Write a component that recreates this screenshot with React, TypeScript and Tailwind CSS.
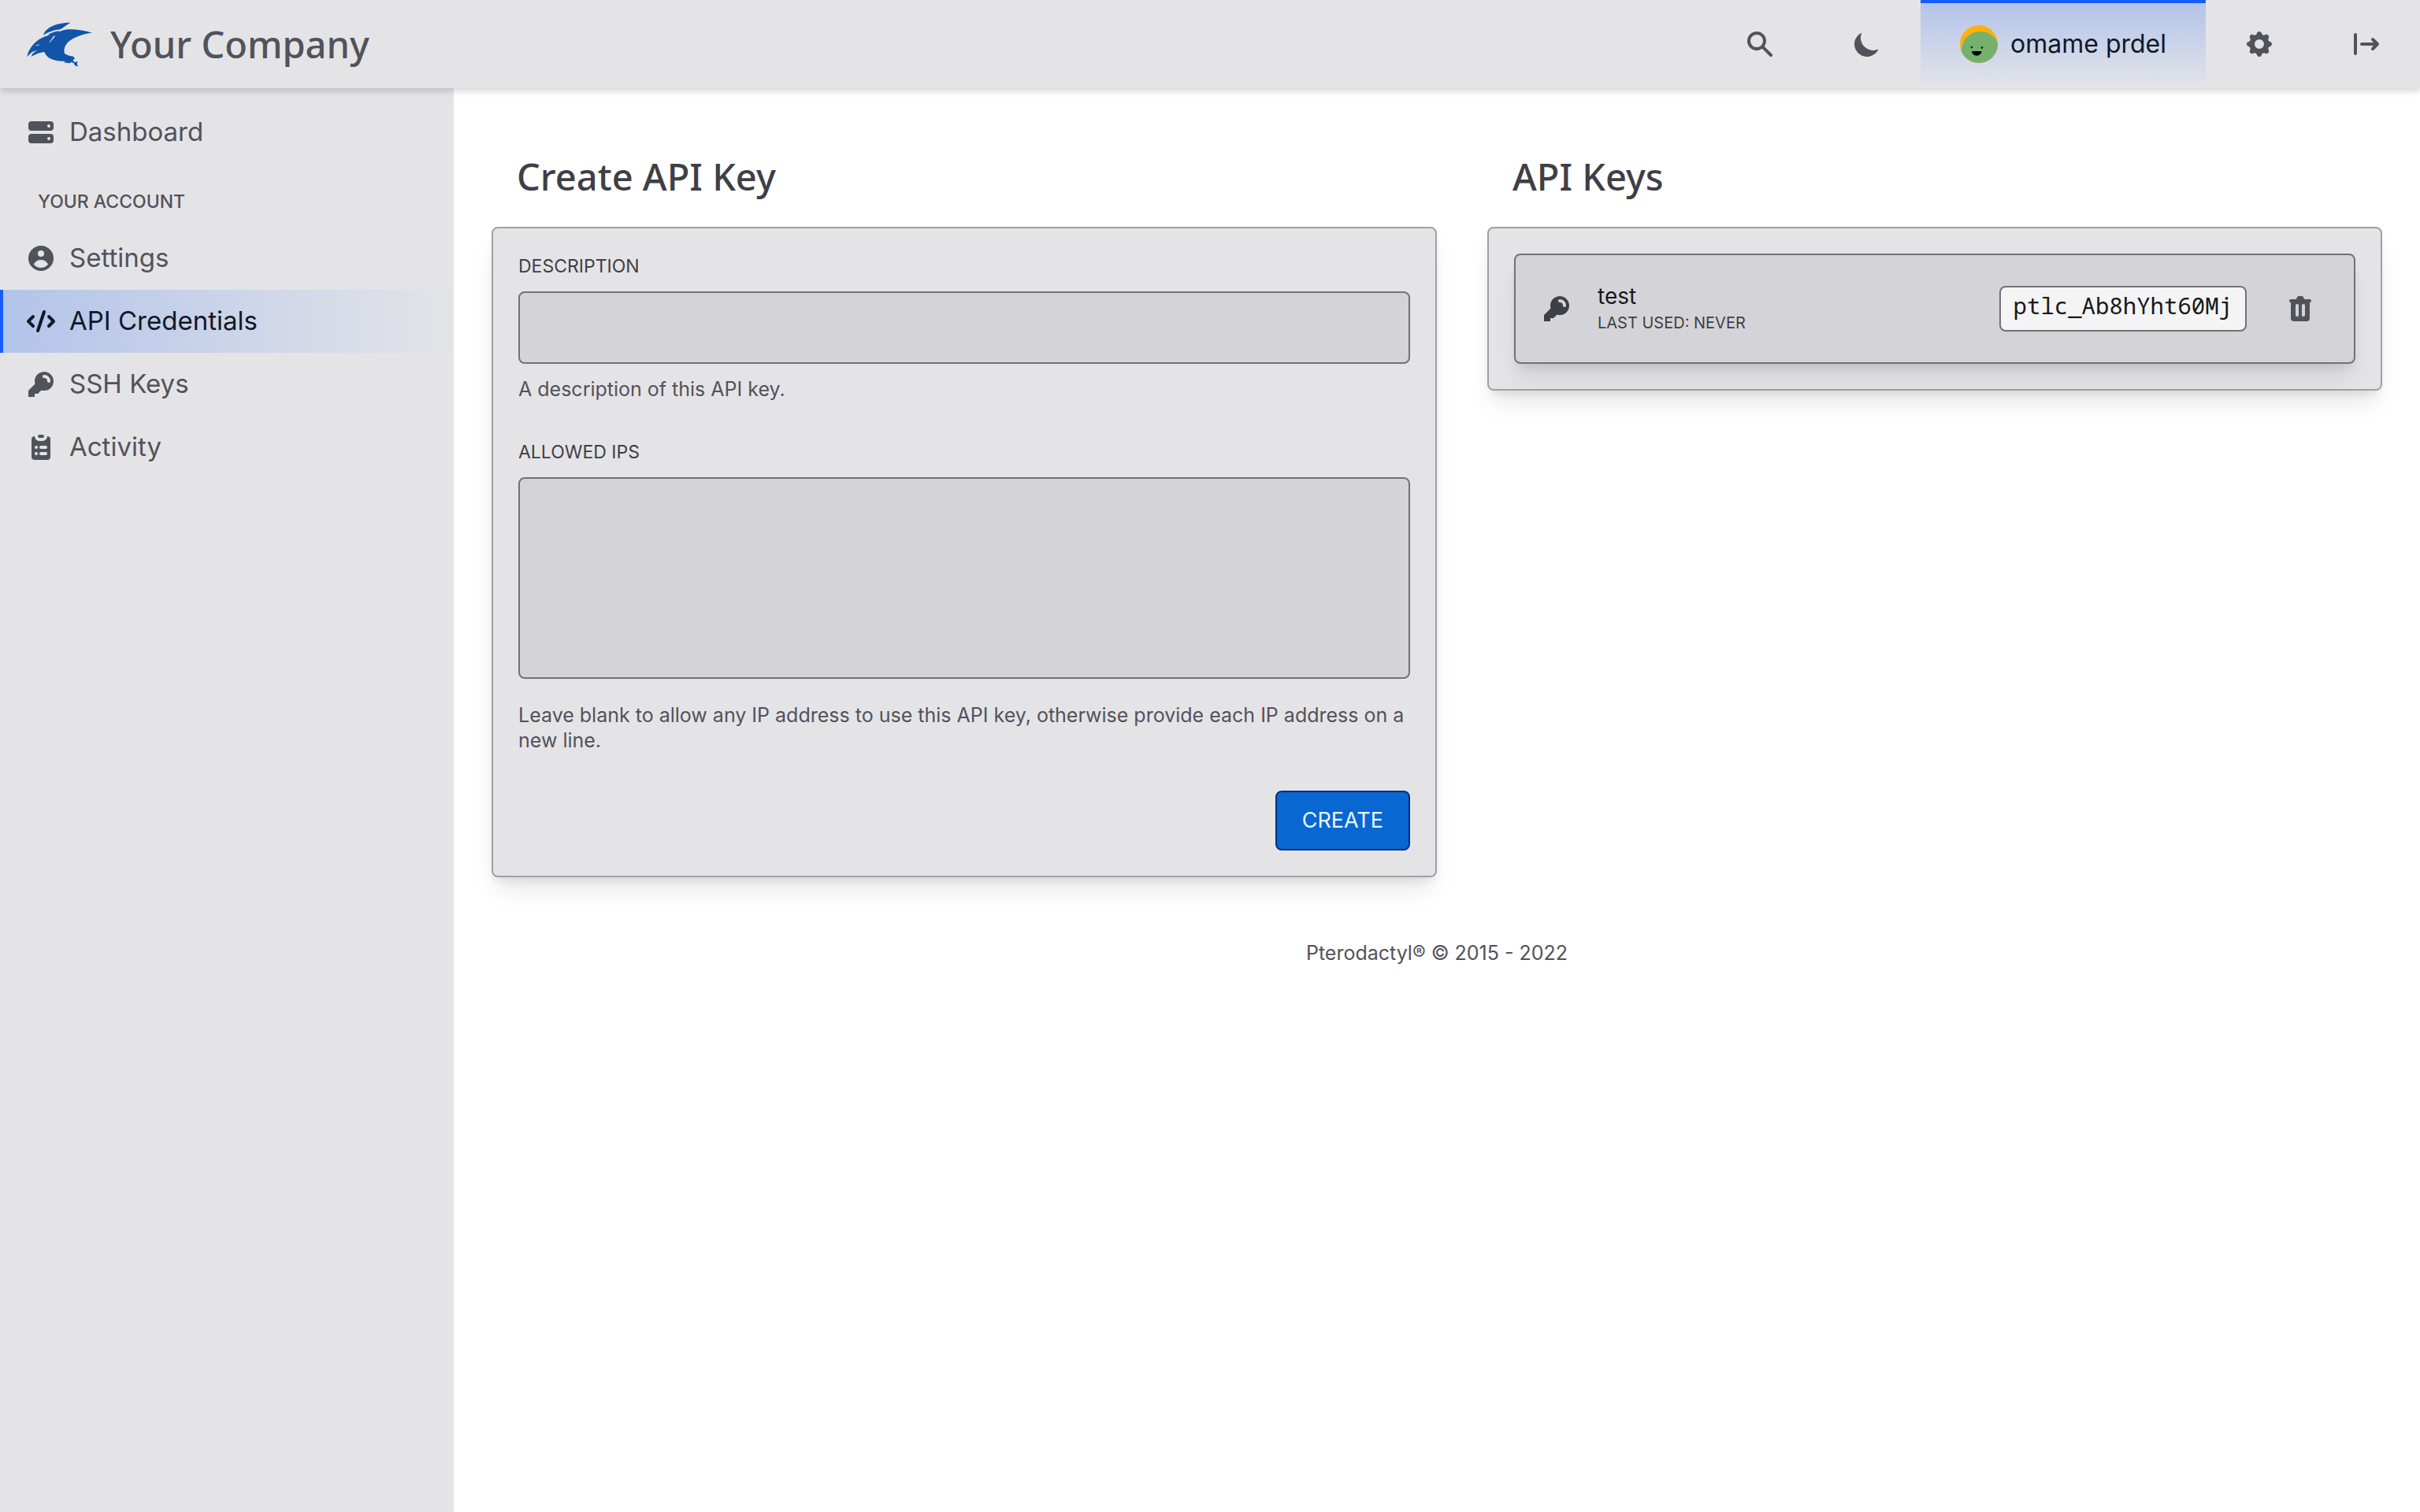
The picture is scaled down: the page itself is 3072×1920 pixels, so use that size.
import { useId } from "react";
import type { ReactNode } from "react";
import { HiServer, HiUserCircle, HiCode, HiKey, HiClipboardList, HiMoon, HiCog, HiSearch, HiTrash } from "react-icons/hi";

const links = [
  { label: "Settings", Icon: HiUserCircle, active: false },
  { label: "API Credentials", Icon: HiCode, active: true },
  { label: "SSH Keys", Icon: HiKey, active: false },
  { label: "Activity", Icon: HiClipboardList, active: false },
];

function Logo() {
  return (
    <svg viewBox="0 0 330 240" className="h-20 w-[110px] shrink-0" fill="#1254a8" aria-hidden="true">
      <path d="M99 86C106 58 148 38 202 38C190 46 176 55 164 64C140 66 118 74 99 86Z" />
      <path d="M116 85C130 76 146 71 162 70C156 77 151 83 146 90C140 88 130 88 116 85Z" />
      <path d="M37 168C42 140 62 116 84 101C100 91 124 84 144 80L120 116L126 112L152 80C164 67 186 63 208 64C236 65 262 70 285 77C252 80 222 92 204 104C186 116 174 134 180 156C188 162 202 166 214 167L219 177L211 180L217 188C222 191 226 186 231 186C226 192 226 198 232 205C222 205 216 200 215 192L202 188C204 192 200 194 195 192L176 190L184 185C158 186 138 182 122 173C112 167 107 160 103 150C88 152 66 158 53 169L58 156L76 143L56 150Z" />
      <path d="M68 126C74 124 80 122 84 119L80 126Z" fill="#e4e4e7" />
    </svg>
  );
}

function Avatar() {
  const clip = useId();
  return (
    <svg viewBox="0 0 48 48" className="size-12 shrink-0" aria-hidden="true">
      <clipPath id={clip}>
        <circle cx="24" cy="24" r="24" />
      </clipPath>
      <g clipPath={`url(#${clip})`}>
        <rect width="48" height="48" fill="#ffb00f" />
        <circle cx="26" cy="32" r="24" fill="#75b06c" />
        <circle cx="15" cy="28" r="1.2" fill="#0b0b0b" />
        <circle cx="28" cy="28.5" r="1.2" fill="#0b0b0b" />
        <path d="M15 33h12.500a6.200 5.600 0 0 1-12.500 0Z" fill="#000" />
      </g>
    </svg>
  );
}

function Card({ title, className, children }: { title: string; className: string; children: ReactNode }) {
  return (
    <section className={className}>
      <h2 className="mb-8 px-8 font-['Noto_Sans'] text-[47px] leading-16 font-medium text-[#3f3f46]">{title}</h2>
      <div className="rounded-lg border-2 border-[#a0a0a4] bg-[#e4e4e7] p-8 shadow-[0_20px_30px_-6px_rgba(0,0,0,0.1),0_8px_12px_-4px_rgba(0,0,0,0.08)]">
        {children}
      </div>
    </section>
  );
}

function NavLink({ label, Icon, active }: { label: string; Icon: typeof HiKey; active: boolean }) {
  return (
    <a
      href="#"
      aria-current={active ? "page" : undefined}
      className={
        active
          ? "flex h-20 items-center gap-4 border-l-4 border-blue-600 bg-linear-to-r from-[#b3c4ea] to-[#e4e4e7] pl-7 text-[#111827]"
          : "flex h-20 items-center gap-4 pl-8 text-[#52525b]"
      }
    >
      <Icon className="size-10" />
      <span>{label}</span>
    </a>
  );
}

export default function App() {
  return (
    <div className="flex min-h-screen flex-col bg-white font-[Inter,sans-serif] text-[#52525b]">
      <header className="relative z-10 flex h-28 items-center justify-between bg-[#e4e4e7] shadow-[0_4px_8px_rgba(0,0,0,0.16)]">
        <a href="#" className="flex items-center gap-2 pl-[22px]">
          <Logo />
          <span className="font-['Noto_Sans'] text-[47px] font-medium">Your Company</span>
        </a>
        <nav className="flex h-full items-center">
          <button aria-label="Search" className="flex h-full w-[136px] items-center justify-center"><HiSearch className="size-10" /></button>
          <button aria-label="Toggle dark mode" className="flex h-full w-[136px] items-center justify-center"><HiMoon className="size-10" /></button>
          <a href="#" className="flex h-full min-w-[362px] items-center justify-center gap-4 border-t-4 border-blue-600 bg-linear-to-b from-[#b3c4ea] to-[#e4e4e7] pb-1 text-[32px] text-[#111827]">
            <Avatar />
            <span>omame prdel</span>
          </a>
          <a href="#" aria-label="Admin" className="flex h-full w-[136px] items-center justify-center"><HiCog className="size-10" /></a>
          <button aria-label="Sign out" className="flex h-full w-[136px] items-center justify-center">
            <svg viewBox="0 0 40 40" className="size-10" fill="none" stroke="currentColor" strokeWidth="4" strokeLinecap="round" strokeLinejoin="round" aria-hidden="true">
              <path d="M6 8v24M14 20h20M28 14l6 6-6 6" />
            </svg>
          </button>
        </nav>
      </header>
      <div className="flex flex-1">
        <aside className="w-xl shrink-0 bg-[#e4e4e7] pt-4 text-[33px]">
          <NavLink label="Dashboard" Icon={HiServer} active={false} />
          <h3 className="flex h-20 items-center px-12 pt-4 text-[23px] font-medium">YOUR ACCOUNT</h3>
          {links.map((link) => (
            <NavLink key={link.label} {...link} />
          ))}
        </aside>
        <main className="flex-1 px-12 pt-20">
          <div className="flex items-start gap-16">
            <Card title="Create API Key" className="w-1/2 shrink-0">
              <form className="flex flex-col text-[25px] leading-8">
                <label htmlFor="description" className="mb-4 text-[23px] leading-8 text-[#3f3f46]">DESCRIPTION</label>
                <input id="description" className="h-[92px] rounded-lg border-2 border-[#71717a] bg-[#d4d4d8] px-6" />
                <p className="mt-4">A description of this API key.</p>
                <label htmlFor="ips" className="mt-12 mb-4 text-[23px] leading-8 text-[#3f3f46]">ALLOWED IPS</label>
                <textarea id="ips" className="h-64 resize-none rounded-lg border-2 border-[#71717a] bg-[#d4d4d8] p-6" />
                <p className="mt-[30px]">Leave blank to allow any IP address to use this API key, otherwise provide each IP address on a new line.</p>
                <button type="button" className="mt-12 h-[76px] self-end rounded-lg border-2 border-[#03307d] bg-[#0967d2] px-8 text-[27px] text-[#e6f6ff]">CREATE</button>
              </form>
            </Card>
            <Card title="API Keys" className="flex-1">
              <div className="flex h-[140px] items-center rounded-lg border-2 border-[#71717a] bg-[#d4d4d8] px-8 shadow-[0_20px_30px_-6px_rgba(0,0,0,0.1),0_8px_12px_-4px_rgba(0,0,0,0.08)]">
                <HiKey className="size-10 text-[#3f3f46]" />
                <div className="ml-8 flex-1 pb-1">
                  <p className="text-[28px] leading-10 text-[#18181b]">test</p>
                  <p className="text-[20px] leading-7 text-[#3f3f46]">LAST USED: NEVER</p>
                </div>
                <code className="rounded-lg border-2 border-[#71717a] bg-[#f4f4f5] px-4 pt-1 pb-3 font-['Noto_Sans_Mono','DejaVu_Sans_Mono',monospace] text-[29px] leading-[38px] text-[#18181b]">ptlc_Ab8hYht60Mj</code>
                <button aria-label="Delete key" className="ml-8 p-4"><HiTrash className="size-10" /></button>
              </div>
            </Card>
          </div>
          <footer className="mt-20 text-center text-[25px] leading-8">Pterodactyl® © 2015 - 2022</footer>
        </main>
      </div>
    </div>
  );
}
